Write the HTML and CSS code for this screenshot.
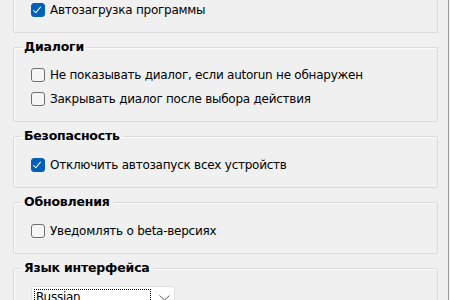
FILE: index.html
```html
<!DOCTYPE html>
<html lang="ru">
<head>
    <meta charset="UTF-8">
    <title>Настройки</title>
    <link rel="stylesheet" href="styles.css">
</head>
<body>
    <div class="window">
        <fieldset class="group single first">
            <legend>Запуск</legend>
            <label class="row"><span class="box checked"></span>Автозагрузка программы</label>
        </fieldset>

        <fieldset class="group">
            <legend>Диалоги</legend>
            <label class="row"><span class="box"></span>Не показывать диалог, если autorun не обнаружен</label>
            <label class="row"><span class="box"></span>Закрывать диалог после выбора действия</label>
        </fieldset>

        <fieldset class="group single">
            <legend>Безопасность</legend>
            <label class="row"><span class="box checked"></span>Отключить автозапуск всех устройств</label>
        </fieldset>

        <fieldset class="group single">
            <legend>Обновления</legend>
            <label class="row"><span class="box"></span>Уведомлять о beta-версиях</label>
        </fieldset>

        <fieldset class="group single">
            <legend>Язык интерфейса</legend>
            <div class="select">
                <span class="value">Russian</span>
                <svg class="chevron" width="11" height="6" viewBox="0 0 11 6"><path d="M0.5 0.5 L5.5 5 L10.5 0.5" fill="none" stroke="#606060" stroke-width="1"/></svg>
            </div>
        </fieldset>
    </div>
</body>
</html>
```

FILE: styles.css
```css
html {
    overflow: hidden;
}
html, body {
    margin: 0;
    padding: 0;
    background: #f0f0f0;
}
body {
    font-family: "DejaVu Sans", "Liberation Sans", sans-serif;
    font-size: 12px;
    letter-spacing: -0.25px;
    color: #000;
}
.window {
    width: 448px;
    min-height: 340px;
    border-right: 1px solid #9a9a9a;
}
.group {
    margin: 6px 10px 0 13px;
    padding: 8px 0 10px 0;
    border: 1px solid #dadada;
    border-radius: 2px;
    box-shadow: inset 1px 1px 0 #fbfbfb;
}
.group.single {
    padding-top: 9px;
}
.group.first {
    margin-top: -27px;
}
.group legend {
    margin-left: 7px;
    padding: 0 3px;
    font-size: 12.5px;
    font-weight: bold;
    letter-spacing: -0.2px;
    line-height: 16px;
}
.row {
    display: flex;
    align-items: center;
    gap: 5px;
    height: 24px;
    margin-left: 17px;
}
.box {
    width: 12px;
    height: 12px;
    border: 1px solid #6f6f6f;
    border-radius: 3px;
    background: #f6f6f6;
    position: relative;
}
.box.checked {
    background: #005fb8;
    border-color: #005fb8;
}
.box.checked::after {
    content: "";
    position: absolute;
    left: 3px;
    top: 1px;
    width: 3px;
    height: 7px;
    border: solid #fff;
    border-width: 0 1.5px 1.5px 0;
    transform: rotate(40deg);
}
.select {
    display: flex;
    align-items: center;
    gap: 8px;
    width: 144px;
    height: 23px;
    margin: 1px 0 0 17px;
    padding: 0 0 0 2px;
    box-sizing: border-box;
    background: #fff;
    border: 1px solid #e0e0e0;
    border-radius: 3px;
}
.select .value {
    width: 117px;
    height: 17px;
    padding-left: 1px;
    box-sizing: border-box;
    border: 1px dotted #000;
    line-height: 15px;
}
```
